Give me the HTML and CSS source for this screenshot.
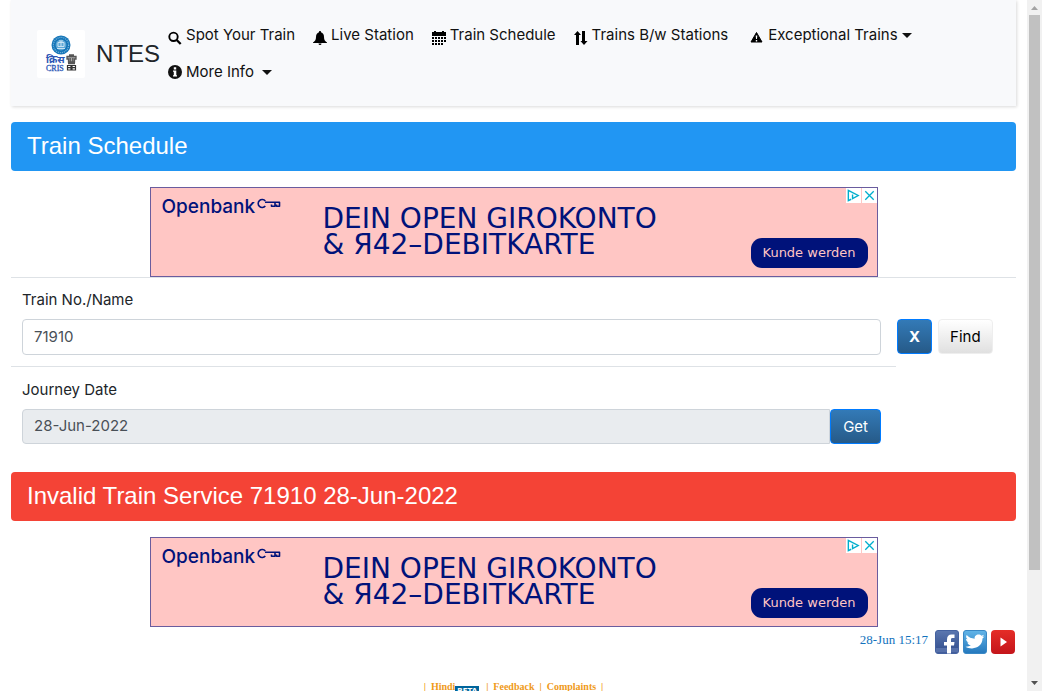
FILE: index.html
```html
<!DOCTYPE html>
<html lang="en">
<head>
<meta charset="utf-8">
<title>NTES - Train Schedule</title>
<link rel="stylesheet" href="styles.css">
</head>
<body>
<svg class="defs" aria-hidden="true">
  <symbol id="key" viewBox="0 0 24 12">
    <path d="M8.300 3A4 4 0 1 0 8.300 8M8 4.200H22.500V8.200H19.500V6.500M18 4.500V8.200H14.500V6.500" fill="none" stroke="#00127a" stroke-width="1.600" stroke-linejoin="round"/>
  </symbol>
  <symbol id="adchoices" viewBox="0 0 16 15">
    <path d="M5.500 11.500L2.500 13V2l10.500 5.500-6 3.200V6.500M7 4.200v1" fill="none" stroke="#00aecd" stroke-width="1.500"/>
  </symbol>
</svg>
<div class="window">
  <div class="page">
    <header class="header">
      <a class="brand" href="#">
        <svg class="logo" viewBox="0 0 48 48" role="img" aria-label="CRIS">
          <rect width="48" height="48" rx="2" fill="#fff"/>
          <circle cx="24" cy="15" r="9.500" fill="#1676b8"/>
          <circle cx="24" cy="15" r="7.600" fill="none" stroke="#7db9df" stroke-width="1.200" stroke-dasharray="1 1"/>
          <circle cx="24" cy="15" r="5.400" fill="#5ea8d6"/>
          <path d="M20 18.500h8M21 16.500h6v-4h-6zM22 11h4M24 11v5" stroke="#d5eaf7" stroke-width=".9" fill="none"/>
          <text x="9" y="33" class="logo-hindi">क्रिस</text>
          <text x="9" y="40.500" class="logo-cris">CRIS</text>
          <path d="M30 26.500h9v2.500h-1.500v3h-6v-3H30zM32 25h5M31 33.500h7M33.200 28v4M35.800 28v4" stroke="#555" stroke-width="1.300" fill="#aaa"/>
          <path d="M30.500 35.500h3.500v4.500h-3.500zM35 35.500h3.500v4.500H35zM30 37.700h9" stroke="#333" stroke-width="1.200" fill="none"/>
        </svg>
        <span class="brand-name">NTES</span>
      </a>
      <nav class="nav">
        <a class="nav-item" href="#"><svg class="icon low" viewBox="0 0 14 14"><circle cx="5.500" cy="5.800" r="4.200" fill="none" stroke="#000" stroke-width="1.900"/><path d="M8.700 9l4 4" stroke="#000" stroke-width="2.300"/></svg>Spot Your Train</a>
        <a class="nav-item" href="#"><svg class="icon low" viewBox="0 0 14 14"><path d="M7 0c.8 0 1 .5 1 1.200C10 1.800 11 3.500 11 6c0 3 1.200 4.300 3 5.500V12H0v-.5C1.800 10.300 3 9 3 6c0-2.500 1-4.200 3-4.800C6 .5 6.200 0 7 0zM5.500 12.500h3Q8.500 14 7 14T5.500 12.500z"/></svg>Live Station</a>
        <a class="nav-item" href="#"><svg class="icon low" viewBox="0 0 14 14"><path d="M0 1h2V0h2v1h6V0h2v1h2v4H0zM0 6h2v2H0zM3 6h2v2H3zM6 6h2v2H6zM9 6h2v2H9zM12 6h2v2h-2zM0 9h2v2H0zM3 9h2v2H3zM6 9h2v2H6zM9 9h2v2H9zM12 9h2v2h-2zM0 12h2v2H0zM3 12h2v2H3zM6 12h2v2H6zM9 12h2v2H9z"/></svg>Train Schedule</a>
        <a class="nav-item" href="#"><svg class="icon low" viewBox="0 0 14 14"><path d="M3.500 0L7 4H5v10H2V4H0zM8 0h3v10h2.500L10 14 6.500 10H8z"/></svg>Trains B/w Stations</a>
        <a class="nav-item wide" href="#"><svg class="icon low" viewBox="0 0 14 14"><path d="M6.500 1.500L12 11H1z" stroke="#000" stroke-linejoin="round"/><path d="M5.700 4.500h1.600L7 8H6zM5.800 9h1.400v1.400H5.800z" fill="#fff"/></svg>Exceptional Trains<span class="caret"></span></a>
        <a class="nav-item" href="#"><svg class="icon" viewBox="0 0 14 14"><circle cx="7" cy="7" r="7" fill="#111"/><path d="M5.800 2.200h2.400v2.300H5.800zM5 5.500h3.300v4.700H9v1.300H5v-1.300h.8V6.800H5z" fill="#fff"/></svg>More Info<span class="caret spaced"></span></a>
      </nav>
    </header>

    <main>
      <h1 class="banner banner-info">Train Schedule</h1>
      <a class="ad" href="#">
        <span class="ad-brand">Openbank<svg class="ad-key"><use href="#key"/></svg></span>
        <span class="ad-headline">DEIN OPEN GIROKONTO<br>&amp; Я42–DEBITKARTE</span>
        <span class="ad-cta">Kunde werden</span>
        <span class="ad-marks"><svg><use href="#adchoices"/></svg><svg viewBox="0 0 16 15"><path d="M3.500 3l9 9M12.500 3l-9 9" stroke="#00aecd" stroke-width="1.400"/></svg></span>
      </a>

      <form class="search">
        <div class="row">
          <div class="field">
            <label for="train">Train No./Name</label>
            <input id="train" class="control" type="text" value="71910">
          </div>
          <div class="actions">
            <button class="btn btn-primary clear" type="button">X</button>
            <button class="btn btn-plain" type="button">Find</button>
          </div>
        </div>
        <div class="row">
          <div class="field ruled">
            <label for="date">Journey Date</label>
            <div class="group">
              <input id="date" class="control control-date" type="text" value="28-Jun-2022" readonly>
              <button class="btn btn-primary" type="button">Get</button>
            </div>
          </div>
        </div>
      </form>

      <h2 class="banner banner-error">Invalid Train Service 71910 28-Jun-2022</h2>
      <a class="ad" href="#">
        <span class="ad-brand">Openbank<svg class="ad-key"><use href="#key"/></svg></span>
        <span class="ad-headline">DEIN OPEN GIROKONTO<br>&amp; Я42–DEBITKARTE</span>
        <span class="ad-cta">Kunde werden</span>
        <span class="ad-marks"><svg><use href="#adchoices"/></svg><svg viewBox="0 0 16 15"><path d="M3.500 3l9 9M12.500 3l-9 9" stroke="#00aecd" stroke-width="1.400"/></svg></span>
      </a>
    </main>

    <div class="social">
      <time>28-Jun 15:17</time>
      <a href="#" aria-label="Facebook"><svg viewBox="0 0 24 24"><defs><linearGradient id="fb" x2="0" y2="1"><stop stop-color="#5b77b0"/><stop offset="1" stop-color="#2f4b8b"/></linearGradient></defs><rect x=".5" y=".5" width="23" height="23" rx="2.500" fill="url(#fb)" stroke="#4361a0"/><path d="M1 18h22v4.500H1z" fill="#5670aa"/><path d="M12 23.500V15.500H9V12h3V9.500c0-3.500 1.800-5.100 4.500-5.100h3v3.500h-2c-1.200 0-1.500.5-1.500 1.600V12h3.500l-.5 3.500h-3v8z" fill="#fff"/></svg></a>
      <a href="#" aria-label="Twitter"><svg viewBox="0 0 24 24"><defs><linearGradient id="tw" x2="0" y2="1"><stop stop-color="#62b5e8"/><stop offset="1" stop-color="#2478bd"/></linearGradient></defs><rect x=".5" y=".5" width="23" height="23" rx="2.500" fill="url(#tw)" stroke="#3988c5"/><path d="M2.500 16.700c2.200.1 4-.5 5.300-1.600-1.700-.1-3-1.200-3.500-2.700h1.600C4 11.800 3 10.300 3 8.900l1.600.4C3 8 2.700 6.400 3.700 5c2 2.300 4.700 3.500 8 3.700-.5-2.500 1.500-4.200 3.900-4.200 1.200 0 2.200.5 2.900 1.200l2.500-.9-1.600 2.200 2.100-.5-2 2.100C19.500 14.500 14.800 18.500 8.800 18.400c-2.500 0-4.600-.5-6.300-1.700z" fill="#fff"/></svg></a>
      <a href="#" aria-label="YouTube"><svg viewBox="0 0 24 24"><defs><linearGradient id="yt" x2="0" y2="1"><stop stop-color="#e52d27"/><stop offset="1" stop-color="#c4151b"/></linearGradient></defs><rect width="24" height="24" rx="4" fill="url(#yt)"/><path d="M9.500 7.500l6.500 4.500-6.500 4.500z" fill="#fff"/></svg></a>
    </div>
    <footer class="footer">
      <span>|</span><a href="#">Hindi<sub class="beta">BETA</sub></a><span>|</span><a href="#">Feedback</a><span>|</span><a href="#">Complaints</a><span>|</span>
    </footer>
  </div>
  <div class="scrollbar" aria-hidden="true">
    <svg viewBox="0 0 15 15"><path d="M4 10h7L7.500 6z" fill="#a3a3a3"/></svg>
    <div class="track"><div class="thumb"></div></div>
    <svg viewBox="0 0 15 15"><path d="M4 5h7L7.500 9z" fill="#505050"/></svg>
  </div>
</div>
</body>
</html>
```
FILE: styles.css
```css
* { box-sizing: border-box; }
body {
  margin: 0;
  background: #fff;
  color: #212529;
  font: 15px/22px Inter, "Open Sans", sans-serif;
}
a { color: inherit; text-decoration: none; }
svg { display: block; flex: none; }
input, button { font: inherit; }
.defs { position: absolute; width: 0; height: 0; }

.window { display: flex; height: 100vh; overflow: hidden; }
.page { flex: 1; min-width: 0; padding: 0 11px; overflow: hidden; }
.scrollbar {
  width: 15px;
  display: flex;
  flex-direction: column;
  background: #f1f1f1;
}
.scrollbar svg { width: 15px; height: 15px; }
.track { flex: 1; padding: 0 2px; }
.thumb { height: 84%; background: #c1c1c1; }

.header {
  display: flex;
  align-items: center;
  padding: 24px 16px 23px 26px;
  background: #f8f9fb;
  box-shadow: 1px 1px 3px rgba(0, 0, 0, .15);
}
.brand { display: flex; align-items: center; gap: 11px; margin-right: 8px; }
.logo { width: 48px; height: 48px; }
.logo-hindi { font: bold 10px "Noto Sans", sans-serif; fill: #2a55b5; }
.logo-cris { font: 8px "Liberation Serif", serif; fill: #2a55b5; stroke: #2a55b5; stroke-width: .3px; }
.brand-name { font: 24px/32px "Liberation Sans", sans-serif; }
.nav { flex: 1; display: flex; flex-wrap: wrap; gap: 15px 18px; color: #111; }
.nav-item { display: flex; align-items: center; gap: 4px; white-space: nowrap; }
.nav-item.wide { margin-left: 4px; }
.icon { width: 14px; height: 14px; }
.icon.low { margin-top: 6px; }
.caret {
  border: 5px solid transparent;
  border-top-color: currentColor;
  border-bottom: 0;
}
.caret.spaced { margin-left: 4px; }

.banner {
  margin: 16px 0;
  padding: 8px 16px 9px;
  border-radius: 4px;
  color: #fff;
  font: 24px/32px "Liberation Sans", sans-serif;
}
.banner-info { background: #2196f3; }
.banner-error { background: #f44336; }

.ad {
  position: relative;
  display: flex;
  width: 728px;
  max-width: 100%;
  height: 90px;
  margin: 0 auto;
  border: 1px solid #6a5c9e;
  background: #ffc6c4;
  color: #00127a;
}
.ad-brand {
  display: flex;
  width: 172px;
  padding: 7px 0 0 11px;
  font: 500 19px/24px Inter, sans-serif;
}
.ad-key { width: 24px; height: 12px; margin: 3px 0 0 2px; }
.ad-headline {
  padding-top: 18px;
  font: 28px/26px "DejaVu Sans", sans-serif;
  white-space: nowrap;
}
.ad-cta {
  align-self: flex-end;
  margin: 0 9px 8px auto;
  padding: 4px 12px;
  border-radius: 11px;
  background: #00127a;
  color: #ffc6c4;
  font: 13px/22px "DejaVu Sans", sans-serif;
}
.ad-marks { position: absolute; top: 0; right: 0; display: flex; gap: 1px; }
.ad-marks svg { width: 15px; height: 15px; background: #fff; }

.search { border-top: 1px solid #dee2e6; }
.row { display: grid; grid-template-columns: 1fr 120px; }
.field { padding: 11px 15px 11px 11px; }
.field.ruled { padding-top: 12px; border-top: 1px solid #dee2e6; }
.field label { display: block; margin-bottom: 8px; }
.control {
  display: block;
  width: 100%;
  height: 36px;
  padding: 5px 11px 7px;
  border: 1px solid #ced4da;
  border-radius: 4px;
  background: #fff;
  color: #495057;
}
.group { display: flex; }
.control-date {
  flex: 1;
  min-width: 0;
  border-radius: 4px 0 0 4px;
  background: #e9ecef;
}
.actions { display: flex; gap: 6px; padding: 41px 0 0 1px; }
.btn {
  height: 35px;
  padding: 0 11px;
  border: 1px solid;
  border-radius: 4px;
}
.group .control { height: 35px; }
.group .btn { padding: 0 12px; }
.btn-primary {
  border-color: #007bff;
  background: linear-gradient(#337ab7, #265a88);
  color: #fff;
}
.clear { font-weight: bold; }
.btn-plain {
  border-color: #eee;
  background: linear-gradient(#fff, #e0e0e0);
  color: #000;
}
.search + .banner { margin-top: 17px; }

.social {
  display: flex;
  justify-content: flex-end;
  gap: 4px;
  margin-top: 3px;
  padding-right: 1px;
}
.social time {
  margin-right: 3px;
  color: #1272bd;
  font: 13px/20px "Liberation Serif", serif;
}
.social svg { width: 24px; height: 24px; }
.footer {
  display: flex;
  justify-content: center;
  gap: 5px;
  margin-top: 26px;
  color: #ef9a1a;
  font: bold 10px/13px "Liberation Serif", serif;
}
.beta {
  display: inline-block;
  margin-right: 2px;
  padding: 0 2px;
  background: #00659c;
  color: #fff;
  font: bold 7px/10px "DejaVu Sans", sans-serif;
}
```
